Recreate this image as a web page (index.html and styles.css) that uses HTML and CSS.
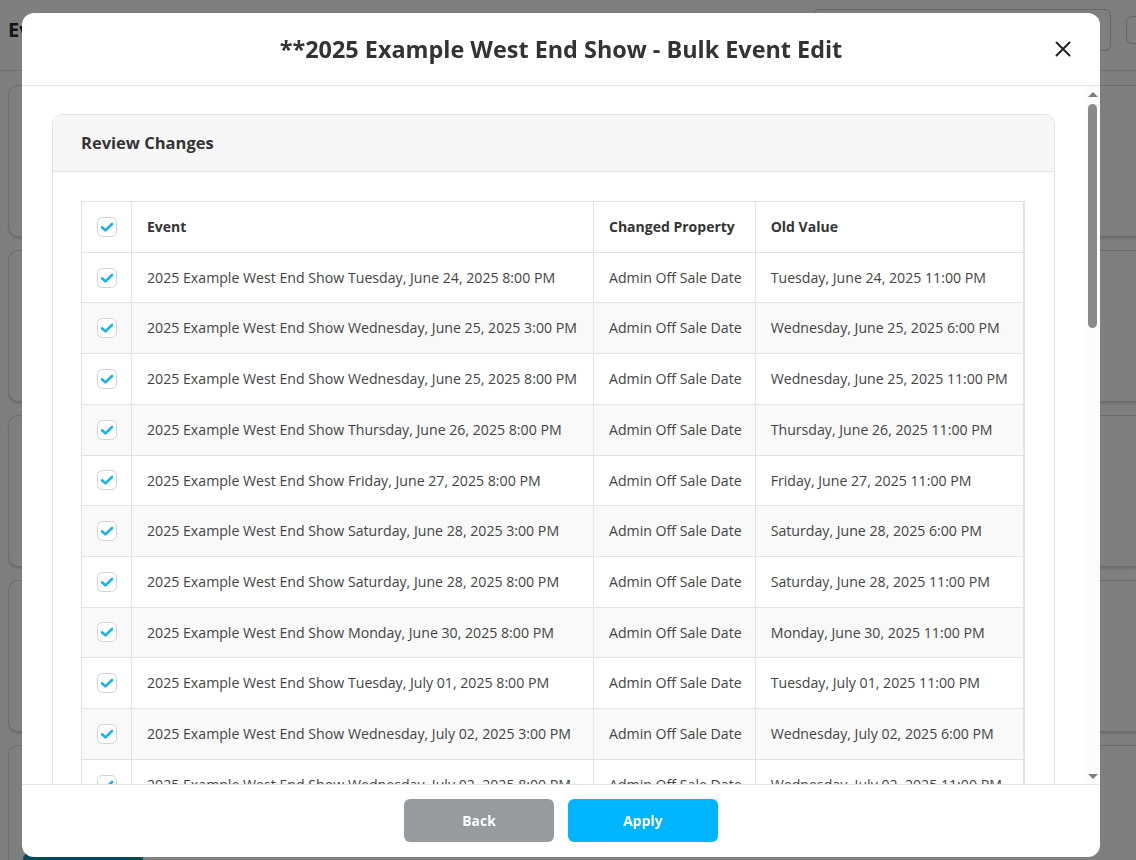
FILE: index.html
```html
<!DOCTYPE html>
<html lang="en">
<head>
<meta charset="utf-8">
<title>Bulk Event Edit</title>
<link rel="stylesheet" href="styles.css">
</head>
<body>
<svg class="defs" width="0" height="0" aria-hidden="true">
  <symbol id="chk" viewBox="0 0 20 20">
    <rect x="0.5" y="0.5" width="19" height="19" rx="5" ry="5" fill="#fff" stroke="#d2d2d2"/>
    <path d="M5 10.3 L8.4 13.4 L15 7" fill="none" stroke="#14b1f3" stroke-width="2.6" stroke-linecap="round" stroke-linejoin="round"/>
  </symbol>
</svg>

<div class="page">
  <div class="topbar">
    <h1 class="page-title">Events</h1>
    <div class="top-actions">
      <div class="search"></div>
      <div class="top-btn"></div>
    </div>
  </div>
  <div class="cards">
    <div class="bg-card"></div>
    <div class="bg-card"></div>
    <div class="bg-card"></div>
    <div class="bg-card"></div>
    <div class="bg-card bg-card-last"><div class="bg-btn"></div></div>
  </div>
</div>

<div class="overlay"></div>

<div class="modal">
  <div class="modal-header">
    <h2 class="modal-title">**2025 Example West End Show - Bulk Event Edit</h2>
    <button class="close" aria-label="Close">
      <svg width="16" height="16" viewBox="0 0 16 16"><path d="M1.5 1.5 L14.5 14.5 M14.5 1.5 L1.5 14.5" stroke="#222" stroke-width="2" stroke-linecap="round"/></svg>
    </button>
  </div>
  <div class="modal-main">
    <div class="modal-body">
      <div class="card">
        <div class="card-header">Review Changes</div>
        <div class="card-body">
          <div class="table-wrap">
            <table class="changes">
              <thead>
                <tr><th class="cb"><svg class="check"><use href="#chk"/></svg></th><th>Event</th><th>Changed Property</th><th>Old Value</th><th>New Value</th></tr>
              </thead>
              <tbody>
                <tr><td class="cb"><svg class="check"><use href="#chk"/></svg></td><td>2025 Example West End Show Tuesday, June 24, 2025 8:00 PM</td><td>Admin Off Sale Date</td><td>Tuesday, June 24, 2025 11:00 PM</td><td>Tuesday, June 24, 2025 10:00 PM</td></tr>
                <tr><td class="cb"><svg class="check"><use href="#chk"/></svg></td><td>2025 Example West End Show Wednesday, June 25, 2025 3:00 PM</td><td>Admin Off Sale Date</td><td>Wednesday, June 25, 2025 6:00 PM</td><td>Wednesday, June 25, 2025 5:00 PM</td></tr>
                <tr><td class="cb"><svg class="check"><use href="#chk"/></svg></td><td>2025 Example West End Show Wednesday, June 25, 2025 8:00 PM</td><td>Admin Off Sale Date</td><td>Wednesday, June 25, 2025 11:00 PM</td><td>Wednesday, June 25, 2025 10:00 PM</td></tr>
                <tr><td class="cb"><svg class="check"><use href="#chk"/></svg></td><td>2025 Example West End Show Thursday, June 26, 2025 8:00 PM</td><td>Admin Off Sale Date</td><td>Thursday, June 26, 2025 11:00 PM</td><td>Thursday, June 26, 2025 10:00 PM</td></tr>
                <tr><td class="cb"><svg class="check"><use href="#chk"/></svg></td><td>2025 Example West End Show Friday, June 27, 2025 8:00 PM</td><td>Admin Off Sale Date</td><td>Friday, June 27, 2025 11:00 PM</td><td>Friday, June 27, 2025 10:00 PM</td></tr>
                <tr><td class="cb"><svg class="check"><use href="#chk"/></svg></td><td>2025 Example West End Show Saturday, June 28, 2025 3:00 PM</td><td>Admin Off Sale Date</td><td>Saturday, June 28, 2025 6:00 PM</td><td>Saturday, June 28, 2025 5:00 PM</td></tr>
                <tr><td class="cb"><svg class="check"><use href="#chk"/></svg></td><td>2025 Example West End Show Saturday, June 28, 2025 8:00 PM</td><td>Admin Off Sale Date</td><td>Saturday, June 28, 2025 11:00 PM</td><td>Saturday, June 28, 2025 10:00 PM</td></tr>
                <tr><td class="cb"><svg class="check"><use href="#chk"/></svg></td><td>2025 Example West End Show Monday, June 30, 2025 8:00 PM</td><td>Admin Off Sale Date</td><td>Monday, June 30, 2025 11:00 PM</td><td>Monday, June 30, 2025 10:00 PM</td></tr>
                <tr><td class="cb"><svg class="check"><use href="#chk"/></svg></td><td>2025 Example West End Show Tuesday, July 01, 2025 8:00 PM</td><td>Admin Off Sale Date</td><td>Tuesday, July 01, 2025 11:00 PM</td><td>Tuesday, July 01, 2025 10:00 PM</td></tr>
                <tr><td class="cb"><svg class="check"><use href="#chk"/></svg></td><td>2025 Example West End Show Wednesday, July 02, 2025 3:00 PM</td><td>Admin Off Sale Date</td><td>Wednesday, July 02, 2025 6:00 PM</td><td>Wednesday, July 02, 2025 5:00 PM</td></tr>
                <tr><td class="cb"><svg class="check"><use href="#chk"/></svg></td><td>2025 Example West End Show Wednesday, July 02, 2025 8:00 PM</td><td>Admin Off Sale Date</td><td>Wednesday, July 02, 2025 11:00 PM</td><td>Wednesday, July 02, 2025 10:00 PM</td></tr>
                <tr><td class="cb"><svg class="check"><use href="#chk"/></svg></td><td>2025 Example West End Show Thursday, July 03, 2025 8:00 PM</td><td>Admin Off Sale Date</td><td>Thursday, July 03, 2025 11:00 PM</td><td>Thursday, July 03, 2025 10:00 PM</td></tr>
                <tr><td class="cb"><svg class="check"><use href="#chk"/></svg></td><td>2025 Example West End Show Friday, July 04, 2025 8:00 PM</td><td>Admin Off Sale Date</td><td>Friday, July 04, 2025 11:00 PM</td><td>Friday, July 04, 2025 10:00 PM</td></tr>
                <tr><td class="cb"><svg class="check"><use href="#chk"/></svg></td><td>2025 Example West End Show Saturday, July 05, 2025 3:00 PM</td><td>Admin Off Sale Date</td><td>Saturday, July 05, 2025 6:00 PM</td><td>Saturday, July 05, 2025 5:00 PM</td></tr>
                <tr><td class="cb"><svg class="check"><use href="#chk"/></svg></td><td>2025 Example West End Show Saturday, July 05, 2025 8:00 PM</td><td>Admin Off Sale Date</td><td>Saturday, July 05, 2025 11:00 PM</td><td>Saturday, July 05, 2025 10:00 PM</td></tr>
                <tr><td class="cb"><svg class="check"><use href="#chk"/></svg></td><td>2025 Example West End Show Monday, July 07, 2025 8:00 PM</td><td>Admin Off Sale Date</td><td>Monday, July 07, 2025 11:00 PM</td><td>Monday, July 07, 2025 10:00 PM</td></tr>
              </tbody>
            </table>
          </div>
        </div>
      </div>
    </div>
    <div class="scrollbar" aria-hidden="true">
      <div class="sb-arrow sb-up"></div>
      <div class="sb-track"><div class="sb-thumb"></div></div>
      <div class="sb-arrow sb-down"></div>
    </div>
  </div>
  <div class="modal-footer">
    <button class="btn btn-back">Back</button>
    <button class="btn btn-apply">Apply</button>
  </div>
</div>
</body>
</html>
```

FILE: styles.css
```css
* { box-sizing: border-box; }

html, body {
  margin: 0;
  padding: 0;
  height: 100%;
  overflow: hidden;
}

body {
  font-family: "Open Sans", "Liberation Sans", Arial, sans-serif;
  background: #fff;
  color: #333;
}

.defs { position: absolute; width: 0; height: 0; }

/* ---------- background page ---------- */
.page {
  height: 100%;
}

.topbar {
  height: 71px;
  display: flex;
  align-items: center;
  justify-content: space-between;
  padding: 0 0 0 8px;
  border-bottom: 1px solid #ddd;
}

.page-title {
  margin: 0 0 12px 0;
  font-size: 20px;
  font-weight: 700;
  color: #2a2a2a;
}

.top-actions {
  display: flex;
  align-items: center;
  gap: 15px;
  margin: 0 -30px 10px 0;
}

.search {
  width: 298px;
  height: 42px;
  border: 1px solid #ccc;
  border-radius: 6px;
  background: #fff;
}

.top-btn {
  width: 40px;
  height: 28px;
  border: 1px solid #ccc;
  border-radius: 6px;
}

.cards {
  display: flex;
  flex-direction: column;
  gap: 13px;
  padding: 14px 0 0 8px;
}

.bg-card {
  height: 152px;
  border: 1px solid #d8d8d8;
  border-right: none;
  border-radius: 10px 0 0 10px;
  background: #fff;
  box-shadow: 0 2px 2px rgba(0,0,0,0.12);
}

.bg-card-last {
  padding: 107px 0 0 14px;
}

.bg-btn {
  width: 120px;
  height: 40px;
  background: #1592b9;
  border-radius: 6px;
}

.overlay {
  position: fixed;
  inset: 0;
  background: rgba(0, 0, 0, 0.5);
}

/* ---------- modal ---------- */
.modal {
  position: fixed;
  left: 22px;
  top: 13px;
  width: 1078px;
  height: 844px;
  background: #fff;
  border-radius: 12px;
  display: flex;
  flex-direction: column;
  overflow: hidden;
}

.modal-header {
  flex: 0 0 73px;
  display: flex;
  align-items: center;
  justify-content: center;
  border-bottom: 1px solid #e4e4e4;
  position: relative;
}

.modal-title {
  margin: 0;
  font-size: 23.4px;
  font-weight: 700;
  color: #333;
}

.close {
  position: absolute;
  right: 29px;
  top: 28px;
  width: 16px;
  height: 16px;
  padding: 0;
  border: 0;
  background: none;
  display: flex;
}

.modal-main {
  flex: 1;
  min-height: 0;
  display: flex;
}

.modal-body {
  flex: 1;
  min-width: 0;
  overflow: hidden;
  padding: 28px 30px;
}

/* fake scrollbar */
.scrollbar {
  flex: 0 0 15px;
  display: flex;
  flex-direction: column;
  background: #fbfbfb;
}

.sb-arrow {
  flex: 0 0 16px;
  display: flex;
  justify-content: center;
  align-items: center;
}

.sb-up::before,
.sb-down::before {
  content: "";
  width: 0;
  height: 0;
  border-left: 5px solid transparent;
  border-right: 5px solid transparent;
}

.sb-up::before { border-bottom: 5px solid #7d7d7d; }
.sb-down::before { border-top: 5px solid #7d7d7d; }

.sb-track {
  flex: 1;
  padding-top: 2px;
  display: flex;
  justify-content: center;
}

.sb-thumb {
  width: 9px;
  height: 224px;
  border-radius: 5px;
  background: #8a8a8a;
}

.card {
  border: 1px solid #e4e4e4;
  border-radius: 10px;
  overflow: hidden;
}

.card-header {
  height: 57px;
  background: #f7f7f7;
  border-bottom: 1px solid #e4e4e4;
  padding: 0 28px 1px;
  display: flex;
  align-items: center;
  font-size: 16.5px;
  font-weight: 700;
  color: #333;
}

.card-body {
  padding: 29px 29px 30px 28px;
}

.table-wrap {
  overflow: hidden;
  border-right: 1px solid #e4e4e4;
}

.changes {
  width: max-content;
  border-collapse: collapse;
  font-size: 14.15px;
  line-height: 19.7px;
  color: #444;
  white-space: nowrap;
}

.changes th,
.changes td {
  border: 1px solid #e4e4e4;
  padding: 15px 14px 15px 15px;
  text-align: left;
  vertical-align: middle;
}

.changes th:nth-child(2),
.changes td:nth-child(2) {
  padding-right: 16px;
}

.changes th:nth-child(3),
.changes td:nth-child(3) {
  padding-right: 13px;
}

.changes th:nth-child(4),
.changes td:nth-child(4) {
  padding-right: 15px;
}

.changes th {
  font-weight: 700;
  color: #333;
  background: #fff;
  font-size: 14px;
}

.changes tbody tr:nth-child(even) td {
  background: #f9f9f9;
}

.changes .cb {
  width: 50px;
  min-width: 50px;
  padding: 0;
}

.check {
  width: 20px;
  height: 20px;
  display: block;
  margin: 0 auto;
}

/* ---------- footer ---------- */
.modal-footer {
  flex: 0 0 73px;
  border-top: 1px solid #e4e4e4;
  display: flex;
  align-items: center;
  justify-content: center;
  gap: 14px;
  padding-bottom: 2px;
}

.btn {
  width: 150px;
  height: 43px;
  border: 0;
  border-radius: 6px;
  font-family: "Open Sans", "Liberation Sans", Arial, sans-serif;
  font-size: 14px;
  font-weight: 700;
  color: #fff;
}

.btn-back { background: #979b9e; }
.btn-apply { background: #00b5ff; }
```
